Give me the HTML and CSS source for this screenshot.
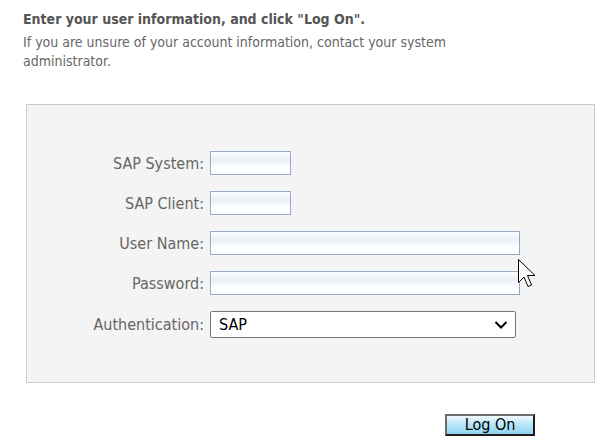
FILE: index.html
```html
<!DOCTYPE html>
<html>
<head>
<meta charset="utf-8">
<link rel="stylesheet" href="styles.css">
</head>
<body>
<div class="page">
  <div class="intro">
    <div class="intro-title">Enter your user information, and click "Log On".</div>
    <div class="intro-text">If you are unsure of your account information, contact your system administrator.</div>
  </div>
  <div class="panel">
    <div class="form">
      <label class="lbl">SAP System:</label>
      <div class="field"><input class="inp inp-short" type="text"></div>
      <label class="lbl">SAP Client:</label>
      <div class="field"><input class="inp inp-short" type="text"></div>
      <label class="lbl">User Name:</label>
      <div class="field"><input class="inp inp-long" type="text"></div>
      <label class="lbl">Password:</label>
      <div class="field"><input class="inp inp-long" type="password"></div>
      <label class="lbl">Authentication:</label>
      <div class="field">
        <div class="select">
          <span class="select-text">SAP</span>
          <svg class="chev" width="14" height="10" viewBox="0 0 14 10"><path d="M1.5 2 L7 7.5 L12.5 2" fill="none" stroke="#000" stroke-width="2"/></svg>
        </div>
      </div>
    </div>
  </div>
  <div class="actions">
    <button class="btn">Log On</button>
  </div>
  <svg class="cursor" width="20" height="30" viewBox="0 0 20 30"><path d="M0.5 0.5 L0.5 23.5 L6 18 L10 27.5 L13.5 26 L9.5 16.5 L17 16.5 Z" fill="#fff" stroke="#000" stroke-width="1"/></svg>
</div>
</body>
</html>
```
FILE: styles.css
```css
html, body {
  margin: 0;
  padding: 0;
  background: #fff;
}
.page {
  position: relative;
  width: 610px;
  height: 446px;
  font-family: "DejaVu Sans Condensed", "DejaVu Sans", Verdana, sans-serif;
  font-stretch: condensed;
}
.intro {
  padding: 10px 0 0 23px;
  width: 480px;
}
.intro-title {
  font-weight: bold;
  color: #555;
  font-size: 14px;
  line-height: 19px;
  margin-bottom: 4px;
}
.intro-text {
  color: #666;
  font-size: 14px;
  line-height: 19px;
}
.panel {
  margin: 33px 0 0 26px;
  width: 567px;
  height: 277px;
  background: #f4f4f4;
  border: 1px solid #cccbdb;
  box-sizing: content-box;
}
.form {
  display: grid;
  grid-template-columns: 177px auto;
  column-gap: 6px;
  row-gap: 16px;
  padding-top: 46px;
  align-items: center;
}
.lbl {
  text-align: right;
  color: #666;
  font-size: 16px;
  line-height: 19px;
}
.field {
  display: flex;
}
.inp {
  height: 24px;
  box-sizing: border-box;
  border: 1px solid #98a8c8;
  background: linear-gradient(#fcfdfe 0%, #e9eef7 35%, #fdfeff 70%, #fff 100%);
  margin: 0;
  padding: 0 3px;
  outline: none;
}
.inp-short { width: 81px; }
.inp-long { width: 310px; }
.select {
  width: 306px;
  height: 27px;
  box-sizing: border-box;
  border: 1px solid #777;
  border-radius: 2px;
  background: #fff;
  display: flex;
  align-items: center;
  justify-content: space-between;
  padding: 0 7px 0 8px;
}
.select-text {
  font-size: 16px;
  color: #000;
}
.actions {
  display: flex;
  padding: 31px 0 0 445px;
}
.btn {
  width: 90px;
  height: 22px;
  box-sizing: border-box;
  margin: 0;
  padding: 0;
  font-family: "DejaVu Sans Condensed", "DejaVu Sans", Verdana, sans-serif;
  font-stretch: condensed;
  font-size: 16px;
  color: #000;
  border: 2px solid;
  border-color: #6c6c6c #1e1e1e #1e1e1e #6c6c6c;
  background: linear-gradient(#f2fbff 0%, #bfe8fa 40%, #8ed4f0 100%);
  line-height: 16px;
}
.cursor {
  position: absolute;
  left: 518px;
  top: 259px;
}
```
